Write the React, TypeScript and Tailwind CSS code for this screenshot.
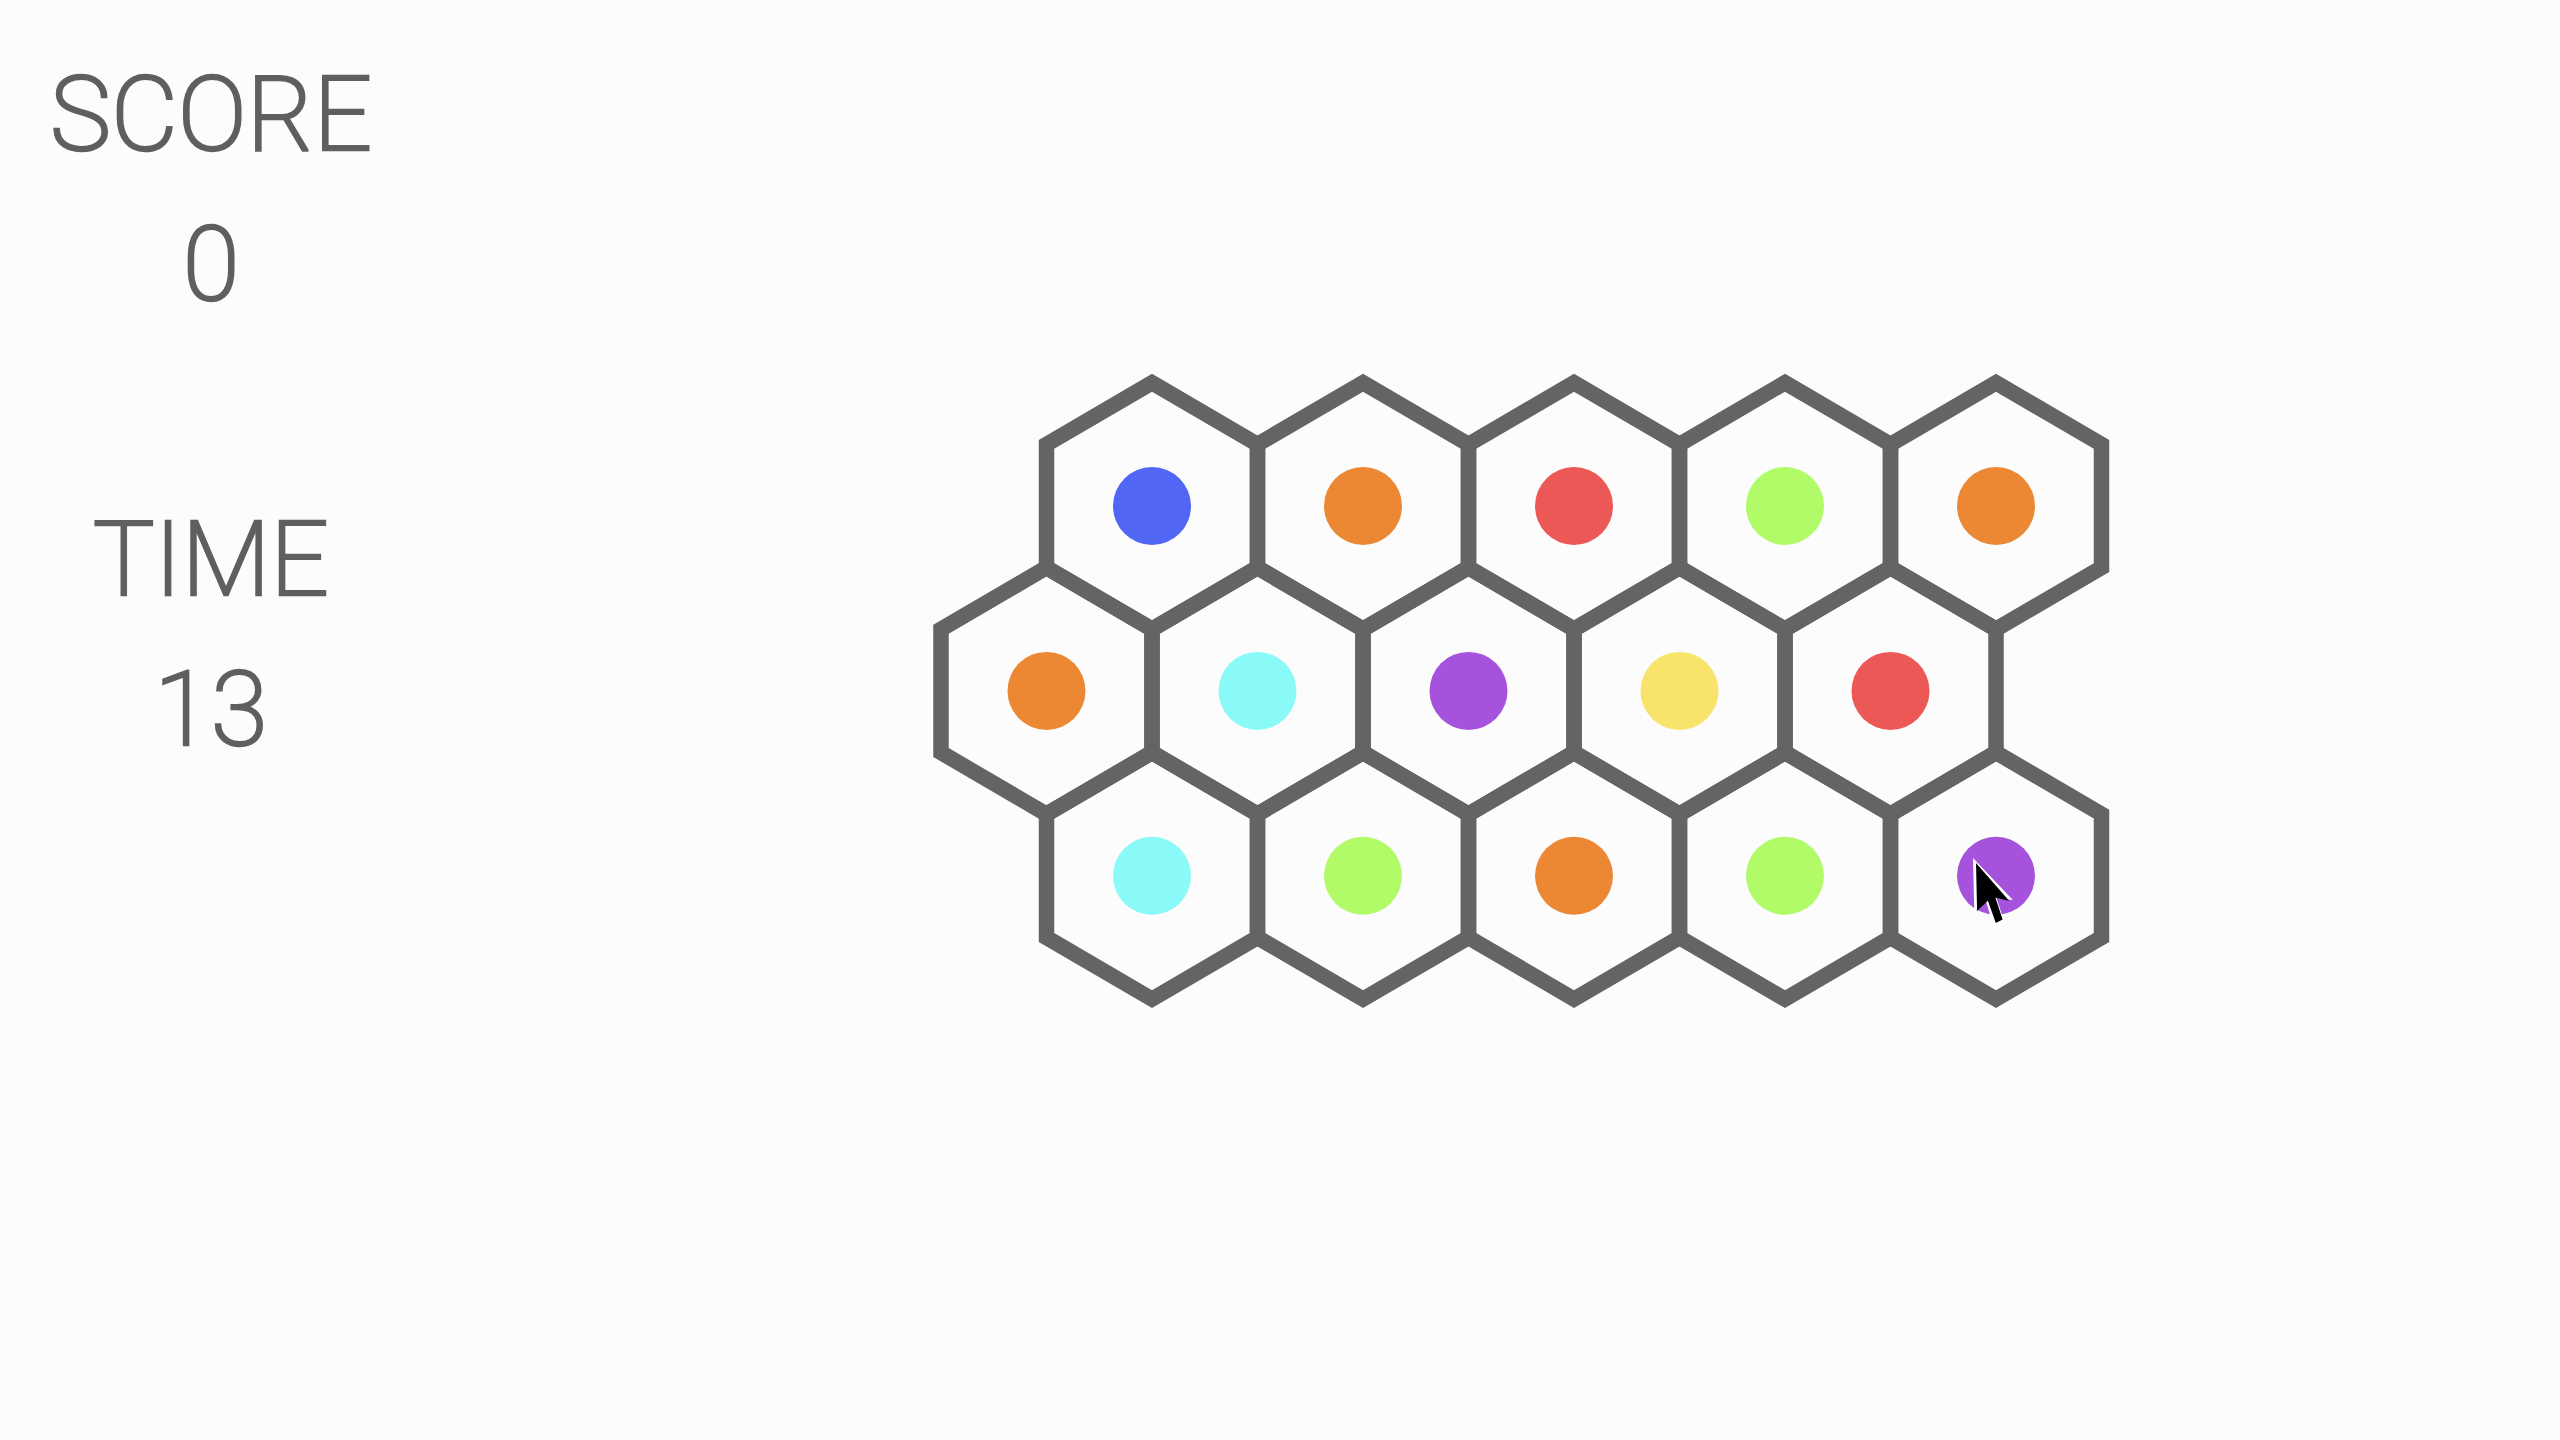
import React from "react"

// board geometry, page pixels
const OX = 920
const OY = 360
const HW = 105.5
const RV = 123.3
const COL = 211
const ROW = 184.9

const rows = [
  { y: 506, x0: 1152, dots: ["#5166f5", "#ec8833", "#eb5856", "#b1fb69", "#ec8833"] },
  { y: 506 + ROW, x0: 1046.5, dots: ["#ec8833", "#8afaf8", "#a553dc", "#f8e46a", "#eb5856"] },
  { y: 506 + ROW * 2, x0: 1152, dots: ["#8afaf8", "#b1fb69", "#ec8833", "#b1fb69", "#a553dc"] },
]

function hexPoints(cx: number, cy: number) {
  const pts = [
    [cx, cy - RV],
    [cx + HW, cy - RV / 2],
    [cx + HW, cy + RV / 2],
    [cx, cy + RV],
    [cx - HW, cy + RV / 2],
    [cx - HW, cy - RV / 2],
  ]
  return pts.map(([x, y]) => `${x - OX},${y - OY}`).join(" ")
}

function Board() {
  return (
    <svg width="1220" height="680" viewBox="0 0 1220 680" className="block">
      {rows.map((row, r) =>
        row.dots.map((c, i) => {
          const cx = row.x0 + COL * i
          return (
            <g key={`${r}-${i}`}>
              <polygon points={hexPoints(cx, row.y)} fill="none" stroke="#646464" strokeWidth="15.5" />
              <circle cx={cx - OX} cy={row.y - OY} r="39" fill={c} />
            </g>
          )
        })
      )}
    </svg>
  )
}

// mouse pointer, white outline under a black arrow
function Cursor() {
  return (
    <div className="absolute left-[1973px] top-[858px] w-[42px] h-[70px]">
      <div className="absolute inset-0 bg-white [clip-path:polygon(0%_0%,3%_76%,30%_60%,50%_100%,76%_94%,56%_57%,95%_60%)]" />
      <div className="absolute left-[3px] top-[5px] w-[36px] h-[60px] bg-black [clip-path:polygon(0%_0%,3%_80%,33%_63%,55%_100%,74%_94%,54%_58%,92%_63%)]" />
    </div>
  )
}

export default function App() {
  return (
    <div className="relative w-[2560px] h-[1440px] bg-[#fcfcfc] overflow-hidden text-[#5f5f5f]">
      <div className="flex">
        <aside className="w-[422px] pt-[40px] flex flex-col items-center text-[103px] leading-[150px] font-['Roboto',sans-serif] font-extralight [font-variation-settings:'wght'_220] [-webkit-text-stroke:2.5px_#5f5f5f]">
          <div>SCORE</div>
          <div>0</div>
          <div className="mt-[145px]">TIME</div>
          <div>13</div>
        </aside>
        <main className="ml-[498px] mt-[360px]">
          <Board />
        </main>
      </div>
      <Cursor />
    </div>
  )
}
